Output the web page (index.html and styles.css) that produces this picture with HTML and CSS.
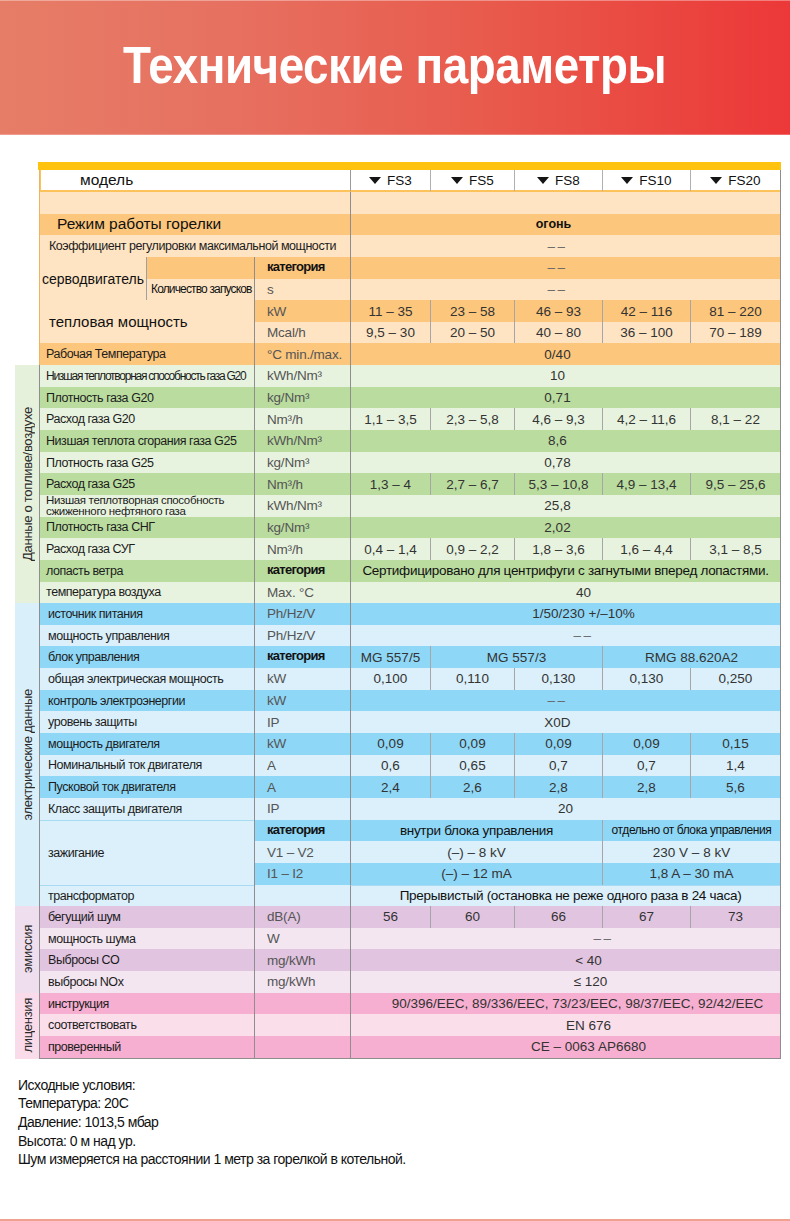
FILE: index.html
```html
<!DOCTYPE html>
<html lang="ru">
<head>
<meta charset="utf-8">
<title>Технические параметры</title>
<link rel="stylesheet" href="styles.css">
</head>
<body>
<div class="page">
  <header class="hero"><h1><span>Технические параметры</span></h1></header>

  <div class="sheet">
    <div class="ybar"></div>

    <section class="sec top">
      <div class="side"></div>
      <div class="grid grid-top">
        <div class="hd model">модель</div>
        <div class="hd fs m1">FS3</div>
        <div class="hd fs m2">FS5</div>
        <div class="hd fs m3">FS8</div>
        <div class="hd fs m4">FS10</div>
        <div class="hd fs m5">FS20</div>

        <div class="c lab-full l"></div><div class="c all l"></div>

        <div class="c lab-full d big">Режим работы горелки</div><div class="c all d v fire pr24">огонь</div>

        <div class="c lab-full l coef">Коэффициент регулировки максимальной мощности</div><div class="c all l v dash pr16">––</div>

        <div class="c l1 l r2 servo">серводвигатель</div><div class="c l2 d"></div><div class="c unit d cat">категория</div><div class="c all d v dash pr16">––</div>
        <div class="c l2 l starts">Количество запусков</div><div class="c unit l">s</div><div class="c all l v dash pr16">––</div>

        <div class="c lab l r2 heat">тепловая мощность</div><div class="c unit d">kW</div>
        <div class="c m1 d v">11 – 35</div><div class="c m2 d v">23 – 58</div><div class="c m3 d v">46 – 93</div><div class="c m4 d v">42 – 116</div><div class="c m5 d v">81 – 220</div>
        <div class="c unit l">Mcal/h</div>
        <div class="c m1 l v">9,5 – 30</div><div class="c m2 l v">20 – 50</div><div class="c m3 l v">40 – 80</div><div class="c m4 l v">36 – 100</div><div class="c m5 l v">70 – 189</div>

        <div class="c lab d t">Рабочая Температура</div><div class="c unit d">°C min./max.</div><div class="c all d v pr16">0/40</div>
      </div>
    </section>

    <section class="sec fuel">
      <div class="side"><span>Данные о топливе/воздухе</span></div>
      <div class="grid">
        <div class="c lab l t sq">Низшая теплотворная способность газа G20</div><div class="c unit l">kWh/Nm³</div><div class="c all l v pr16">10</div>
        <div class="c lab d t">Плотность газа G20</div><div class="c unit d">kg/Nm³</div><div class="c all d v pr16">0,71</div>
        <div class="c lab l t">Расход газа G20</div><div class="c unit l">Nm³/h</div>
        <div class="c m1 l v">1,1 – 3,5</div><div class="c m2 l v">2,3 – 5,8</div><div class="c m3 l v">4,6 – 9,3</div><div class="c m4 l v">4,2 – 11,6</div><div class="c m5 l v">8,1 – 22</div>
        <div class="c lab d t">Низшая теплота сгорания газа G25</div><div class="c unit d">kWh/Nm³</div><div class="c all d v pr16">8,6</div>
        <div class="c lab l t">Плотность газа G25</div><div class="c unit l">kg/Nm³</div><div class="c all l v pr16">0,78</div>
        <div class="c lab d t">Расход газа G25</div><div class="c unit d">Nm³/h</div>
        <div class="c m1 d v">1,3 – 4</div><div class="c m2 d v">2,7 – 6,7</div><div class="c m3 d v">5,3 – 10,8</div><div class="c m4 d v">4,9 – 13,4</div><div class="c m5 d v">9,5 – 25,6</div>
        <div class="c lab l t two">Низшая теплотворная способность<br>сжиженного нефтяного газа</div><div class="c unit l">kWh/Nm³</div><div class="c all l v pr16">25,8</div>
        <div class="c lab d t">Плотность газа СНГ</div><div class="c unit d">kg/Nm³</div><div class="c all d v pr16">2,02</div>
        <div class="c lab l t">Расход газа СУГ</div><div class="c unit l">Nm³/h</div>
        <div class="c m1 l v">0,4 – 1,4</div><div class="c m2 l v">0,9 – 2,2</div><div class="c m3 l v">1,8 – 3,6</div><div class="c m4 l v">1,6 – 4,4</div><div class="c m5 l v">3,1 – 8,5</div>
        <div class="c lab d t">лопасть ветра</div><div class="c unit d cat">категория</div><div class="c all d v strong">Сертифицировано для центрифуги с загнутыми вперед лопастями.</div>
        <div class="c lab l t">температура воздуха</div><div class="c unit l">Max. °C</div><div class="c all l v pl36">40</div>
      </div>
    </section>

    <section class="sec elec">
      <div class="side"><span>электрические данные</span></div>
      <div class="grid">
        <div class="c lab d t">источник питания</div><div class="c unit d">Ph/Hz/V</div><div class="c all d v pl36">1/50/230 +/–10%</div>
        <div class="c lab l t">мощность управления</div><div class="c unit l">Ph/Hz/V</div><div class="c all l v dash pl36">––</div>
        <div class="c lab d t">блок управления</div><div class="c unit d cat">категория</div>
        <div class="c m1 d v">MG 557/5</div><div class="c m23 d v">MG 557/3</div><div class="c m45 d v">RMG 88.620A2</div>
        <div class="c lab l t">общая электрическая мощность</div><div class="c unit l">kW</div>
        <div class="c m1 l v">0,100</div><div class="c m2 l v">0,110</div><div class="c m3 l v">0,130</div><div class="c m4 l v">0,130</div><div class="c m5 l v">0,250</div>
        <div class="c lab d t">контроль электроэнергии</div><div class="c unit d">kW</div><div class="c all d v dash pr16">––</div>
        <div class="c lab l t">уровень защиты</div><div class="c unit l">IP</div><div class="c all l v pr16">X0D</div>
        <div class="c lab d t">мощность двигателя</div><div class="c unit d">kW</div>
        <div class="c m1 d v">0,09</div><div class="c m2 d v">0,09</div><div class="c m3 d v">0,09</div><div class="c m4 d v">0,09</div><div class="c m5 d v">0,15</div>
        <div class="c lab l t">Номинальный ток двигателя</div><div class="c unit l">A</div>
        <div class="c m1 l v">0,6</div><div class="c m2 l v">0,65</div><div class="c m3 l v">0,7</div><div class="c m4 l v">0,7</div><div class="c m5 l v">1,4</div>
        <div class="c lab d t">Пусковой ток двигателя</div><div class="c unit d">A</div>
        <div class="c m1 d v">2,4</div><div class="c m2 d v">2,6</div><div class="c m3 d v">2,8</div><div class="c m4 d v">2,8</div><div class="c m5 d v">5,6</div>
        <div class="c lab l t">Класс защиты двигателя</div><div class="c unit l">IP</div><div class="c all l v">20</div>

        <div class="c lab l t r3 ign">зажигание</div><div class="c unit d cat">категория</div>
        <div class="c m13 d v strong">внутри блока управления</div><div class="c m45 d v small">отдельно от блока управления</div>
        <div class="c unit l">V1 – V2</div>
        <div class="c m13 l v">(–) – 8 kV</div><div class="c m45 l v">230 V – 8 kV</div>
        <div class="c unit d">I1 – I2</div>
        <div class="c m13 d v">(–) – 12 mA</div><div class="c m45 d v">1,8 A – 30 mA</div>

        <div class="c lab l t trafo">трансформатор</div><div class="c unit l"></div><div class="c all l v strong pl10 trafo">Прерывистый (остановка не реже одного раза в 24 часа)</div>
      </div>
    </section>

    <section class="sec emis">
      <div class="side"><span>эмиссия</span></div>
      <div class="grid">
        <div class="c lab d t">бегущий шум</div><div class="c unit d">dB(A)</div>
        <div class="c m1 d v">56</div><div class="c m2 d v">60</div><div class="c m3 d v">66</div><div class="c m4 d v">67</div><div class="c m5 d v">73</div>
        <div class="c lab l t">мощность шума</div><div class="c unit l">W</div><div class="c all l v dash pl76">––</div>
        <div class="c lab d t">Выбросы CO</div><div class="c unit d">mg/kWh</div><div class="c all d v pl46">&lt; 40</div>
        <div class="c lab l t">выбросы NOx</div><div class="c unit l">mg/kWh</div><div class="c all l v pl50">≤ 120</div>
      </div>
    </section>

    <section class="sec lic">
      <div class="side"><span>лицензия</span></div>
      <div class="grid grid-last">
        <div class="c lab d t">инструкция</div><div class="c unit d"></div><div class="c all d v pl24">90/396/EEC, 89/336/EEC, 73/23/EEC, 98/37/EEC, 92/42/EEC</div>
        <div class="c lab l t">соответствовать</div><div class="c unit l"></div><div class="c all l v pl46">EN 676</div>
        <div class="c lab d t">проверенный</div><div class="c unit d"></div><div class="c all d v pl46">CE – 0063 AP6680</div>
      </div>
    </section>
  </div>

  <div class="notes">
    <p>Исходные условия:</p>
    <p>Температура: 20C</p>
    <p>Давление: 1013,5 мбар</p>
    <p>Высота: 0 м над ур.</p>
    <p>Шум измеряется на расстоянии 1 метр за горелкой в котельной.</p>
  </div>
</div>
</body>
</html>
```

FILE: styles.css
```css
* { box-sizing: border-box; }

body {
  margin: 0;
  background: #ffffff;
  font-family: "Liberation Sans", Arial, sans-serif;
  color: #222;
}

.page {
  height: 1221px;
  border-bottom: 2px solid #f2a08f;
  overflow: hidden;
}

/* ---------- header ---------- */
.hero {
  height: 135px;
  background: linear-gradient(90deg, #e67d67 0%, #e77060 30%, #e85a4c 62%, #ec3838 100%);
  box-shadow: inset 0 1px 0 rgba(255, 255, 255, 0.35), inset 0 -1px 0 rgba(255, 255, 255, 0.25);
  text-align: center;
}
.hero h1 {
  margin: 0;
  padding-top: 39px;
  font-size: 52px;
  line-height: 52px;
  font-weight: bold;
  color: #fff;
}
.hero h1 span {
  display: inline-block;
  transform: scaleX(0.88);
  letter-spacing: -0.5px;
}

/* ---------- table ---------- */
.sheet {
  margin-top: 27px;
  padding-left: 15px;
  width: 781px;
}
.ybar {
  margin-left: 23px;
  width: 743px;
  height: 8px;
  background: #ffc20e;
}
.sec { display: flex; }
.side {
  width: 24px;
  flex: none;
  display: flex;
  align-items: center;
  justify-content: center;
}
.side span {
  writing-mode: vertical-rl;
  transform: rotate(180deg);
  font-size: 13px;
  letter-spacing: -0.3px;
  color: #2a2a2a;
  white-space: nowrap;
}
.grid {
  display: grid;
  grid-template-columns: 106px 108px 96px 80px 84px 88px 88px 90px;
  grid-auto-rows: 21.65px;
  border-left: 1px solid #8e8e8e;
  border-right: 1px solid #8e8e8e;
}
.grid-top {
  grid-template-rows: 22px;
  border-left-color: #eeb463;
}
.grid-last { border-bottom: 1px solid #8e8e8e; }

.fuel .side { background: #e5f1db; }
.elec .side { background: #d9f0fa; }
.emis .side { background: #efdeed; }
.lic .side { background: #f9dbe9; }

/* header row */
.hd {
  background: #fff;
  border-bottom: 2px solid #fcc35a;
  display: flex;
  align-items: center;
  justify-content: center;
  font-size: 13.5px;
  color: #111;
}
.hd.model {
  grid-column: 1 / 4;
  justify-content: flex-start;
  padding-left: 39px;
  font-size: 15.5px;
  border-left: 1px solid #fcc35a;
}
.hd.fs::before {
  content: "";
  width: 0;
  height: 0;
  border-left: 6px solid transparent;
  border-right: 6px solid transparent;
  border-top: 7px solid #151515;
  margin-right: 6px;
}
.hd.m1 { border-left: 1px solid #9a9a9a; }
.hd.m2, .hd.m3, .hd.m4, .hd.m5 { border-left: 1px solid #b0b0b0; }

/* cells */
.c {
  display: flex;
  align-items: center;
  white-space: nowrap;
  overflow: hidden;
  min-width: 0;
}
.lab-full { grid-column: 1 / 4; }
.lab { grid-column: 1 / 3; }
.l1 { grid-column: 1 / 2; }
.l2 { grid-column: 2 / 3; border-left: 1px solid #a0a0a0; }
.unit {
  grid-column: 3 / 4;
  border-left: 1px solid #8e8e8e;
  padding-left: 12px;
  font-size: 13.5px;
  letter-spacing: -0.2px;
  color: #555;
}
.all { grid-column: 4 / 9; border-left: 1px solid #8e8e8e; }
.m1 { grid-column: 4 / 5; border-left: 1px solid #8e8e8e; }
.m2 { grid-column: 5 / 6; }
.m3 { grid-column: 6 / 7; }
.m4 { grid-column: 7 / 8; }
.m5 { grid-column: 8 / 9; }
.m23 { grid-column: 5 / 7; }
.m45 { grid-column: 7 / 9; }
.m13 { grid-column: 4 / 7; border-left: 1px solid #8e8e8e; }
.c.m2, .c.m3, .c.m4, .c.m5, .c.m23, .c.m45 { border-left: 1px solid #a6a6a6; }
.r2 { grid-row: span 2; }
.r3 { grid-row: span 3; }

/* row colours */
.top .d { background: #fcc67c; }
.top .l { background: #fee4c3; }
.fuel .d { background: #badc9f; }
.fuel .l { background: #e8f3df; }
.elec .d { background: #8fd7f6; }
.elec .l { background: #dbf0fa; }
.emis .d { background: #e1c4e0; }
.emis .l { background: #f3e6f1; }
.lic .d { background: #f6afd0; }
.lic .l { background: #fadfeb; }

/* text */
.v {
  justify-content: center;
  font-size: 13.5px;
  color: #333;
}
.v.strong { color: #111; font-size: 13.5px; letter-spacing: -0.3px; }
.v.small { font-size: 12px; letter-spacing: -0.4px; color: #111; }
.v.fire { font-weight: bold; font-size: 12.5px; color: #111; }
.v.dash { color: #666; letter-spacing: 2.5px; }
.pr16 { padding-right: 16px; }
.pr24 { padding-right: 24px; }
.pl10 { padding-left: 10px; }
.pl24 { padding-left: 24px; }
.pl36 { padding-left: 36px; }
.pl46 { padding-left: 46px; }
.pl50 { padding-left: 50px; }
.pl76 { padding-left: 76px; }

.t {
  padding-left: 6px;
  font-size: 12.5px;
  letter-spacing: -0.45px;
  color: #1c1c1c;
}
.t.sq { font-size: 12px; letter-spacing: -1.25px; }
.t.two {
  line-height: 11px;
  font-size: 11.5px;
  letter-spacing: -0.35px;
}
.elec .t, .emis .t, .lic .t { padding-left: 8px; }
.big {
  padding-left: 17px;
  font-size: 15.5px;
  color: #111;
}
.coef {
  padding-left: 9px;
  font-size: 12.5px;
  letter-spacing: -0.45px;
  color: #1c1c1c;
}
.servo {
  padding-left: 2px;
  font-size: 14px;
  color: #111;
}
.starts {
  padding-left: 4px;
  font-size: 12px;
  letter-spacing: -0.85px;
  color: #111;
}
.heat {
  padding-left: 9px;
  font-size: 15px;
  color: #111;
}
.cat {
  color: #111;
  font-weight: bold;
  letter-spacing: -0.7px;
  font-size: 13px;
  align-items: flex-start;
  padding-top: 2px;
}
.ign { border-top: 1px solid #a6dbf2; }
.trafo { border-top: 1px solid #a6dbf2; }

/* ---------- notes ---------- */
.notes {
  margin-top: 17px;
  padding-left: 18px;
  font-size: 14px;
  letter-spacing: -0.5px;
  color: #111;
}
.notes p {
  margin: 0;
  line-height: 18.7px;
}
```
